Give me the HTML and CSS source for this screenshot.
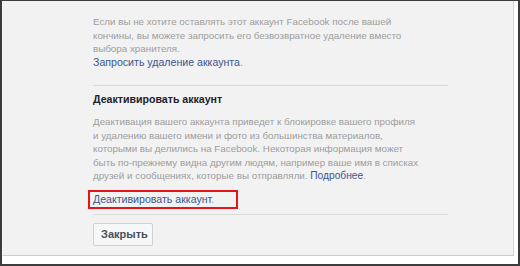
FILE: index.html
```html
<!DOCTYPE html>
<html>
<head>
  <meta charset="UTF-8">
  <title>Деактивировать аккаунт</title>
  <link rel="stylesheet" href="styles.css">
</head>
<body>
  <div class="frame">
    <div class="panel">
      <div class="content">
        <div class="section">
          <p class="muted">Если вы не хотите оставлять этот аккаунт Facebook после вашей<br>кончины, вы можете запросить его безвозвратное удаление вместо<br>выбора хранителя.</p>
          <a class="link" href="#">Запросить удаление аккаунта</a><span class="muted">.</span>
        </div>

        <div class="section last">
          <h3>Деактивировать аккаунт</h3>
          <p class="muted">Деактивация вашего аккаунта приведет к блокировке вашего профиля<br>и удалению вашего имени и фото из большинства материалов,<br>которыми вы делились на Facebook. Некоторая информация может<br>быть по-прежнему видна другим людям, например ваше имя в списках<br>друзей и сообщениях, которые вы отправляли. <a class="link small" href="#">Подробнее</a>.</p>
          <div class="highlight"><a class="link" href="#">Деактивировать аккаунт</a><span class="muted">.</span></div>
        </div>

        <button class="btn">Закрыть</button>
      </div>
    </div>
  </div>
</body>
</html>
```

FILE: styles.css
```css
body { margin: 0; font-family: "Liberation Sans", Arial, sans-serif; font-size: 10.6px; }
.frame { width: 520px; height: 266px; box-sizing: border-box; border: 2px solid #3c3c3c; border-top-width: 1px; background: #fff; }
.panel { height: 255px; margin-right: 4px; box-sizing: border-box; background: #f2f2f2; border-right: 1px solid #d6d6d6; border-bottom: 1px solid #cccccc; border-left: 1px solid #fafafa; }
.content { width: 355px; margin-left: 90px; padding-top: 14px; }
.section { border-bottom: 1px solid #d9d9d9; padding-bottom: 16px; line-height: 13.5px; white-space: nowrap; }
.section.last { padding-bottom: 5px; }
.section p { margin: 0; font-size: 9.8px; }
.muted { color: #9d9d9d; }
.link { color: #3b5590; text-decoration: none; }
.link.small { font-size: 10.2px; }
h3 { margin: 6px 0 9px; font-size: 10.6px; line-height: 14px; font-weight: bold; color: #1d2129; }
.highlight { display: inline-block; margin: 7px 0 0 -5px; padding: 0 22px 0 3px; height: 15px; line-height: 15px; border: 2px solid #e8141a; vertical-align: top; }
.btn { margin-top: 8px; font-family: inherit; font-size: 11px; font-weight: bold; color: #4b4f56; background: #f6f7f9; border: 1px solid #ced0d4; border-radius: 2px; padding: 0 7px; width: 60px; height: 23px; }
```
